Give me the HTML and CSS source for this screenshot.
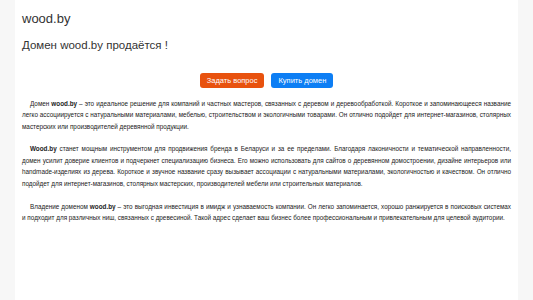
FILE: index.html
```html
<!DOCTYPE html>
<html lang="ru">
  <head>
    <meta charset="UTF-8" />
    <meta name="viewport" content="width=device-width, initial-scale=1.0" />
    <title>wood.by</title>
    <link rel="stylesheet" href="styles.css">
  </head>
  <body>
    <div class="page">
      <h1 class="logo">wood.by</h1>
      <h2 class="title">Домен wood.by продаётся !</h2>
      <div class="actions">
        <button class="btn btn-ask">Задать вопрос</button>
        <button class="btn btn-buy">Купить домен</button>
      </div>
      <div class="text">
        <p>Домен <b>wood.by</b> – это идеальное решение для компаний и частных мастеров, связанных с деревом и деревообработкой. Короткое и запоминающееся название легко ассоциируется с натуральными материалами, мебелью, строительством и экологичными товарами. Он отлично подойдет для интернет-магазинов, столярных мастерских или производителей деревянной продукции.</p>
        <p><b>Wood.by</b> станет мощным инструментом для продвижения бренда в Беларуси и за ее пределами. Благодаря лаконичности и тематической направленности, домен усилит доверие клиентов и подчеркнет специализацию бизнеса. Его можно использовать для сайтов о деревянном домостроении, дизайне интерьеров или handmade-изделиях из дерева. Короткое и звучное название сразу вызывает ассоциации с натуральными материалами, экологичностью и качеством. Он отлично подойдет для интернет-магазинов, столярных мастерских, производителей мебели или строительных материалов.</p>
        <p>Владение доменом <b>wood.by</b> – это выгодная инвестиция в имидж и узнаваемость компании. Он легко запоминается, хорошо ранжируется в поисковых системах и подходит для различных ниш, связанных с древесиной. Такой адрес сделает ваш бизнес более профессиональным и привлекательным для целевой аудитории.</p>
      </div>
    </div>
  </body>
</html>
```

FILE: styles.css
```css
body {
  margin: 0;
  background: #f7f7f7;
  font-family: "Liberation Sans", Arial, sans-serif;
  color: #333;
}
.page {
  background: #fff;
  margin: 0 15px;
  min-height: 100vh;
  padding: 11px 7px 0;
  box-sizing: border-box;
}
.logo {
  margin: 0;
  font-size: 13px;
  line-height: 15px;
  font-weight: normal;
}
.title {
  margin: 12px 0 0;
  font-size: 11.5px;
  line-height: 15px;
  font-weight: normal;
}
.actions {
  display: flex;
  justify-content: center;
  gap: 7px;
  margin-top: 20px;
}
.btn {
  border: 0;
  border-radius: 3px;
  color: #fff;
  font-family: inherit;
  font-size: 7.5px;
  height: 15px;
  padding: 0 7px;
}
.btn-ask {
  background: #e8520e;
}
.btn-buy {
  background: #0d7ef4;
}
.text {
  margin-top: 9.5px;
  font-size: 6.35px;
  line-height: 11.6px;
  color: #222;
}
.text p {
  margin: 0 0 11px;
  text-align: justify;
  text-indent: 8px;
}
```
